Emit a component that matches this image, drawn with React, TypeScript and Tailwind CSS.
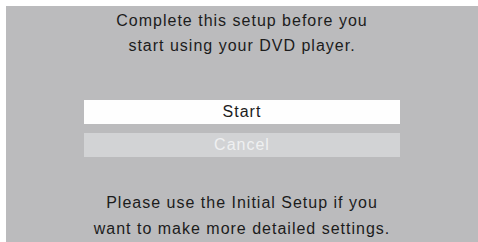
export default function App() {
  return (
    <div className="w-[478px] h-[242px] bg-white pl-[6px] pt-[6px] overflow-hidden">
      <div
        className="w-[472px] h-[236px] bg-[#bbbbbd] flex flex-col items-center text-[16px] tracking-[1px] text-[#1c1c1c]"
        style={{ fontFamily: '"Liberation Sans", Arial, sans-serif' }}
      >
        <div className="mt-[2px] text-center leading-[25px]">
          <div>Complete this setup before you</div>
          <div>start using your DVD player.</div>
        </div>
        <div className="mt-[42px] w-[316px] flex flex-col gap-[9px]">
          <div className="h-[24px] leading-[24px] bg-[#fefefe] text-center">Start</div>
          <div className="h-[24px] leading-[24px] bg-[#d2d3d5] text-center text-[#eff0f1]">Cancel</div>
        </div>
        <div className="mt-[33px] text-center leading-[26px]">
          <div>Please use the Initial Setup if you</div>
          <div>want to make more detailed settings.</div>
        </div>
      </div>
    </div>
  );
}
